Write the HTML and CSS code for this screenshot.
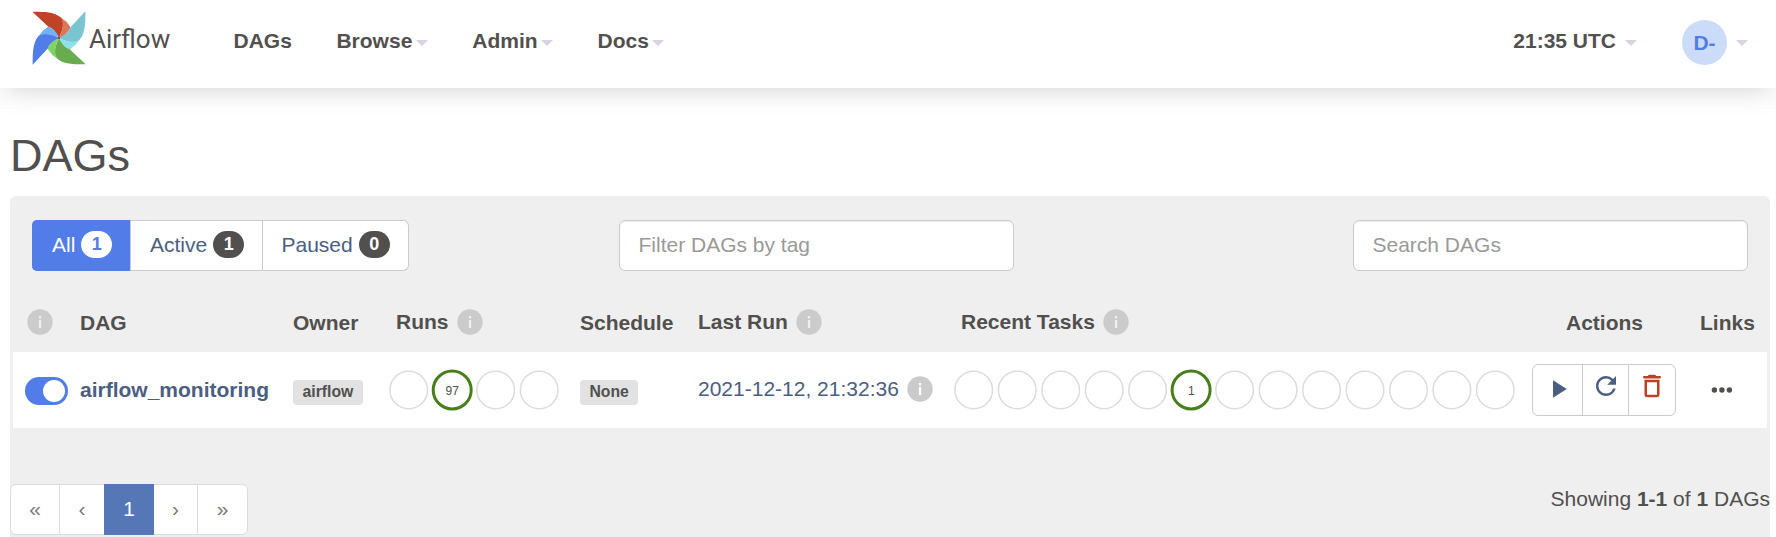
FILE: index.html
```html
<!DOCTYPE html>
<html lang="en">
<head>
<meta charset="utf-8">
<title>DAGs - Airflow</title>
<link rel="stylesheet" href="styles.css">
</head>
<body>
<svg class="defs" width="0" height="0">
  <symbol id="info" viewBox="0 0 26 26">
    <circle cx="13" cy="13" r="12.7" fill="#cbcbcb"/>
    <path d="M11.9 7h2.3v2.5h-2.3zM11.9 11h2.3v8h-2.3z" fill="currentColor"/>
  </symbol>
</svg>
<header class="navbar">
  <a class="brand">
    <svg class="pinwheel" viewBox="96 32 162 162">
      <g><path fill="#c04327" d="M97 34C125 34 162 33 182 51C194 62 191 85 177 113C170 98 158 82 146 80Z"/><path fill="#de7557" d="M181 50Q200 62 211 80L210 85Q197 106 177 113C190 90 192 62 181 50Z"/></g>
      <g transform="rotate(90 177 113)"><path fill="#7bc5d2" d="M97 34C125 34 162 33 182 51C194 62 191 85 177 113C170 98 158 82 146 80Z"/><path fill="#8fe0ed" d="M181 50Q200 62 211 80L210 85Q197 106 177 113C190 90 192 62 181 50Z"/></g>
      <g transform="rotate(180 177 113)"><path fill="#68ac4f" d="M97 34C125 34 162 33 182 51C194 62 191 85 177 113C170 98 158 82 146 80Z"/><path fill="#7fd464" d="M181 50Q200 62 211 80L210 85Q197 106 177 113C190 90 192 62 181 50Z"/></g>
      <g transform="rotate(270 177 113)"><path fill="#527de8" d="M97 34C125 34 162 33 182 51C194 62 191 85 177 113C170 98 158 82 146 80Z"/><path fill="#72b1f8" d="M181 50Q200 62 211 80L210 85Q197 106 177 113C190 90 192 62 181 50Z"/></g>
      <circle cx="177" cy="113" r="3.5" fill="#51504e"/>
    </svg>
    <span class="brand-name">Airflow</span>
  </a>
  <nav class="menu">
    <a>DAGs</a>
    <a>Browse<b class="caret"></b></a>
    <a>Admin<b class="caret"></b></a>
    <a>Docs<b class="caret"></b></a>
  </nav>
  <div class="clock">21:35 UTC<b class="caret"></b></div>
  <div class="user"><span class="avatar">D-</span><b class="caret"></b></div>
</header>
<main>
  <h1>DAGs</h1>
  <section class="panel">
    <div class="filters">
      <div class="tabs">
        <a class="tab active">All<span class="count">1</span></a>
        <a class="tab">Active<span class="count">1</span></a>
        <a class="tab">Paused<span class="count">0</span></a>
      </div>
      <input class="field tag" placeholder="Filter DAGs by tag">
      <input class="field" placeholder="Search DAGs">
    </div>
    <div class="row head">
      <span><svg class="info first"><use href="#info"/></svg></span>
      <span>DAG</span>
      <span>Owner</span>
      <span class="with-info runs-head">Runs<svg class="info"><use href="#info"/></svg></span>
      <span>Schedule</span>
      <span class="with-info">Last Run<svg class="info"><use href="#info"/></svg></span>
      <span class="with-info tasks-head">Recent Tasks<svg class="info"><use href="#info"/></svg></span>
      <span class="actions-head">Actions</span>
      <span>Links</span>
    </div>
    <div class="row dag">
      <span><i class="toggle"></i></span>
      <a class="dag-name">airflow_monitoring</a>
      <span><span class="label">airflow</span></span>
      <svg class="circles" width="180" height="42">
        <g class="ring"><circle cx="19.7" cy="21" r="18.8"/><circle cx="106.7" cy="21" r="18.8"/><circle cx="150.2" cy="21" r="18.8"/></g>
        <circle class="success" cx="63.2" cy="21" r="19"/>
        <text x="63.2" y="25.8">97</text>
      </svg>
      <span><span class="label">None</span></span>
      <span class="with-info date">2021-12-12, 21:32:36<svg class="info"><use href="#info"/></svg></span>
      <svg class="circles" width="570" height="42">
        <g class="ring"><circle cx="19.7" cy="21" r="18.8"/><circle cx="63.2" cy="21" r="18.8"/><circle cx="106.7" cy="21" r="18.8"/><circle cx="150.2" cy="21" r="18.8"/><circle cx="193.6" cy="21" r="18.8"/><circle cx="280.6" cy="21" r="18.8"/><circle cx="324.1" cy="21" r="18.8"/><circle cx="367.5" cy="21" r="18.8"/><circle cx="411" cy="21" r="18.8"/><circle cx="454.5" cy="21" r="18.8"/><circle cx="497.9" cy="21" r="18.8"/><circle cx="541.3" cy="21" r="18.8"/></g>
        <circle class="success" cx="237.1" cy="21" r="19"/>
        <text x="237.4" y="25.8">1</text>
      </svg>
      <div class="actions">
        <a class="play"><svg viewBox="0 0 24 24"><path d="M8 5v14l11-7z"/></svg></a>
        <a class="refresh"><svg viewBox="0 0 24 24"><path d="M17.65 6.35A7.958 7.958 0 0 0 12 4c-4.42 0-7.99 3.58-7.99 8s3.57 8 7.99 8c3.73 0 6.84-2.55 7.73-6h-2.08A5.99 5.99 0 0 1 12 18c-3.31 0-6-2.69-6-6s2.69-6 6-6c1.66 0 3.14.69 4.22 1.78L13 11h7V4l-2.35 2.35z"/></svg></a>
        <a class="delete"><svg viewBox="0 0 24 24"><path d="M6 19c0 1.1.9 2 2 2h8c1.1 0 2-.9 2-2V7H6v12zM8 9h8v10H8V9zm7.5-5l-1-1h-5l-1 1H5v2h14V4h-3.5z"/></svg></a>
      </div>
      <svg class="dots" width="22" height="8"><circle cx="3.4" cy="4" r="2.7"/><circle cx="10.9" cy="4" r="2.7"/><circle cx="18.4" cy="4" r="2.7"/></svg>
    </div>
    <div class="footer">
      <div class="pages">
        <a class="p1">«</a><a class="p2">‹</a><a class="p3">1</a><a class="p4">›</a><a class="p5">»</a>
      </div>
      <div class="summary">Showing <b>1-1</b> of <b>1</b> DAGs</div>
    </div>
  </section>
</main>
</body>
</html>
```
FILE: styles.css
```css
* { box-sizing: border-box; }
body {
  margin: 0;
  height: 537px;
  overflow: hidden;
  background: #fff;
  color: #51504e;
  font: 21px/30px "Liberation Sans", Arial, sans-serif;
}
.defs { display: block; }
.navbar {
  display: flex;
  align-items: flex-start;
  height: 88px;
  background: #fff;
  box-shadow: 0 8px 25px -6px rgba(81, 80, 78, .25);
  font-weight: bold;
}
.brand { display: flex; width: 233.5px; padding: 11px 0 0 32px; }
.pinwheel { width: 54px; height: 54px; flex: none; }
.brand-name {
  margin: 13px 0 0 3px;
  font: 26px/30px Roboto, sans-serif;
}
.menu { display: flex; gap: 44.6px; padding-top: 26px; }
.menu a, .clock, .user { display: flex; align-items: center; }
.caret {
  border: 6px solid transparent;
  border-top-color: #dcd0e3;
  border-bottom: 0;
  margin: 4px 0 0 3.4px;
}
.clock { margin: 26px 45px 0 auto; }
.clock .caret { margin-left: 9px; }
.user { margin: 20px 28px 0 0; }
.user .caret { margin-left: 9px; margin-top: 1px; }
.avatar {
  width: 45px;
  height: 45px;
  border-radius: 50%;
  background: #cbdcf9;
  color: #527ce8;
  text-align: center;
  line-height: 45px;
}
main { padding: 43px 6px 0 10px; }
h1 { margin: 0; height: 65px; font-size: 45px; font-weight: normal; line-height: 50px; }
.panel { height: 360px; padding-top: 24px; border-radius: 6px 6px 0 0; background: #efefef; }
.filters { display: flex; justify-content: space-between; height: 51px; padding: 0 22px; }
.tabs { display: flex; width: 377px; margin-right: 210px; }
.tab {
  display: flex;
  align-items: center;
  width: 132px;
  padding: 0 0 2px 19px;
  border: 1px solid #cbcbcb;
  border-left: 0;
  background: #fff;
  color: #4a5e82;
}
.tab.active { width: 99px; padding-left: 20px; border-color: #527ce8; border-right-color: #cbcbcb; border-radius: 5px 0 0 5px; background: #527ce8; color: #fff; }
.tab:last-child { width: 146px; padding-left: 18.5px; border-radius: 0 6px 6px 0; }
.count {
  width: 31px;
  height: 27px;
  margin-left: 6px;
  border-radius: 14px;
  background: #51504e;
  color: #fff;
  font-size: 18px;
  font-weight: bold;
  line-height: 27px;
  text-align: center;
}
.active .count { background: #fff; color: #527ce8; }
.field {
  width: 395px;
  height: 51px;
  padding: 0 18px 2px 18.5px;
  border: 1px solid #cbcbcb;
  border-radius: 6px;
  background: #fff;
  box-shadow: inset 0 1px 1px rgba(0, 0, 0, .075);
  font: inherit;
}
.tag { margin-right: auto; }
.field::placeholder { color: #999; opacity: 1; }
.row {
  display: grid;
  grid-template-columns: 67px 213px 96px 191px 118px 256px 578px 168px 1fr;
  align-items: center;
  margin: 0 3px;
}
.head { height: 81px; padding-top: 22px; color: #51504e; font-weight: bold; }
.info { width: 26px; height: 26px; margin-left: 8px; color: #efefef; flex: none; }
.info.first { display: block; margin: -2px 0 0 14px; }
.with-info { display: flex; align-items: center; margin-top: -2px; white-space: nowrap; }
.runs-head { padding-left: 7px; }
.tasks-head { padding-left: 7px; }
.actions-head { padding-left: 34px; }
.dag { height: 76px; background: #fff; }
.toggle { display: block; width: 43px; height: 28px; margin: 2px 0 0 12px; padding: 3px; border-radius: 14px; background: #527ce8; }
.toggle::after { content: ""; display: block; width: 22px; height: 22px; margin-left: auto; border-radius: 50%; background: #fff; }
.dag-name { color: #4a5e82; font-weight: bold; }
.label {
  display: block;
  width: max-content;
  height: 25px;
  margin-top: 4px;
  padding: 0 9.5px;
  border-radius: 4px;
  background: #e2e2e2;
  font-size: 15.75px;
  font-weight: bold;
  line-height: 23px;
}
.row .circles + span .label { margin-left: 0; }
.circles { margin-top: -1px; overflow: visible; font-size: 12px; text-anchor: middle; fill: #51504e; }
.ring { fill: none; stroke: #dcdcdc; stroke-width: 1.5px; }
.success { fill: none; stroke: #47801a; stroke-width: 3px; }
.date { color: #4a5e82; }
.date .info { color: #fff; }
.actions { display: flex; width: 144px; height: 52px; border: 1px solid #cbcbcb; border-radius: 6px; fill: #4a5e82; }
.actions a { border-left: 1px solid #cbcbcb; }
.actions svg { display: block; width: 30px; height: 30px; }
.actions .play { width: 49px; padding: 9px 0 0 10px; border: 0; }
.refresh { width: 46px; padding: 6px 0 0 8px; }
.delete { flex: 1; padding: 6px 0 0 8px; fill: #bf4024; }
.dots { margin-left: 11px; fill: #51504e; }
.footer { display: flex; justify-content: space-between; padding-top: 56px; }
.pages { display: flex; height: 51px; border: 1px solid #dcdcdc; border-radius: 6px; background: #fff; color: #777; line-height: 48px; text-align: center; }
.pages a { border-right: 1px solid #dcdcdc; }
.pages .p1 { width: 49px; }
.pages .p2 { width: 44px; border: 0; }
.pages .p3 { width: 50px; margin: -1px 0; border: 0; background: #5577b5; color: #fff; line-height: 50px; }
.pages .p4 { width: 44px; }
.pages .p5 { width: 49px; border: 0; }
.summary { white-space: nowrap; }
```
